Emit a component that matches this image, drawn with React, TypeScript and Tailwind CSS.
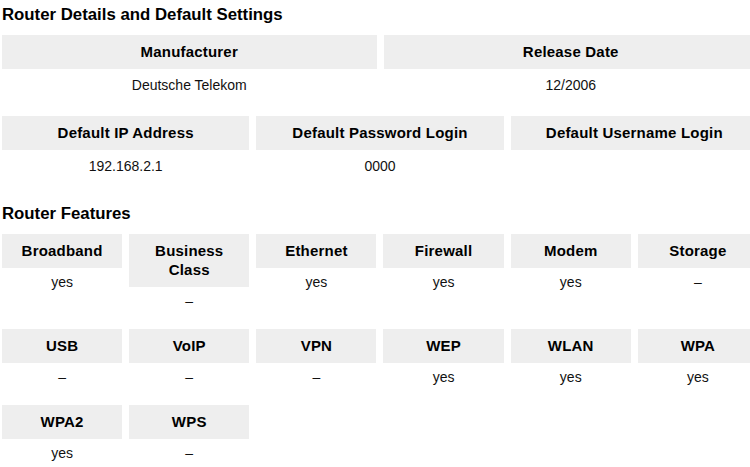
const features: [string, string][] = [
  ['Broadband', 'yes'],
  ['Business Class', '–'],
  ['Ethernet', 'yes'],
  ['Firewall', 'yes'],
  ['Modem', 'yes'],
  ['Storage', '–'],
  ['USB', '–'],
  ['VoIP', '–'],
  ['VPN', '–'],
  ['WEP', 'yes'],
  ['WLAN', 'yes'],
  ['WPA', 'yes'],
  ['WPA2', 'yes'],
  ['WPS', '–'],
];

function Header({ children }: { children: React.ReactNode }) {
  return (
    <div className="bg-[#eeeeee] px-2 pt-[7px] pb-[8px] text-center text-[15px] font-bold leading-[19px] tracking-[0.2px] text-black">
      {children}
    </div>
  );
}

function DetailCell({ label, value }: { label: string; value: string }) {
  return (
    <div>
      <Header>{label}</Header>
      <div className="flex h-[32px] items-center justify-center text-[14px] text-[#111]">{value}</div>
    </div>
  );
}

export default function App() {
  return (
    <div className="w-[758px] bg-white pl-[2px] font-['Liberation_Sans',Arial,sans-serif] text-black">
      <h2 className="h-[30px] text-[16.8px] font-bold leading-[30px]">Router Details and Default Settings</h2>

      <div className="mt-[5px] grid grid-cols-2 gap-x-[7px]">
        <DetailCell label="Manufacturer" value="Deutsche Telekom" />
        <DetailCell label="Release Date" value="12/2006" />
      </div>

      <div className="mt-[15px] grid grid-cols-3 gap-x-[7px]">
        <DetailCell label="Default IP Address" value="192.168.2.1" />
        <DetailCell label="Default Password Login" value="0000" />
        <DetailCell label="Default Username Login" value="" />
      </div>

      <h2 className="mt-[17px] h-[30px] text-[16.8px] font-bold leading-[30px]">Router Features</h2>

      <div className="mt-[5px] grid grid-cols-6 gap-x-[7px] gap-y-[14px]">
        {features.map(([name, val]) => (
          <div key={name}>
            <Header>{name}</Header>
            <div className="flex h-[28px] items-center justify-center text-[14px] text-[#111]">{val}</div>
          </div>
        ))}
      </div>
    </div>
  );
}
